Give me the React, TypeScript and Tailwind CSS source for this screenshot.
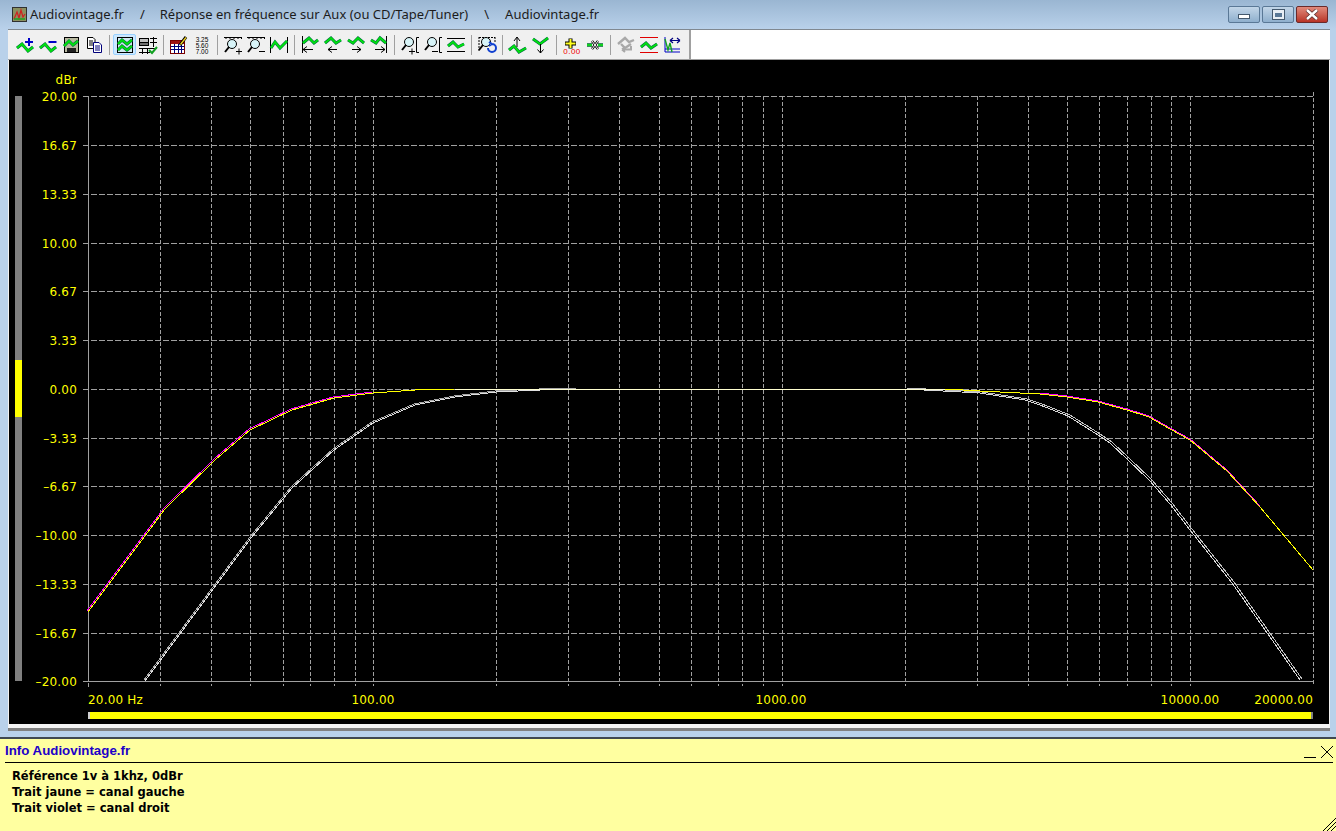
import type { ReactNode } from "react";

// Log scale of the plot: 20 Hz sits at x=88, 20 kHz at x=1313
const logX = (hz: number) => 88 + Math.log10(hz / 20) * (1225 / 3);

const FREQS = [
  30, 40, 50, 60, 70, 80, 90, 100, 200, 300, 400, 500, 600, 700, 800, 900, 1000, 2000, 3000, 4000, 5000, 6000, 7000,
  8000, 9000, 10000,
];

const LEVELS: [number, string][] = [
  [96, "20.00"],
  [145, "16.67"],
  [194, "13.33"],
  [243, "10.00"],
  [291, "6.67"],
  [340, "3.33"],
  [389, "0.00"],
  [438, "–3.33"],
  [486, "–6.67"],
  [535, "–10.00"],
  [584, "–13.33"],
  [633, "–16.67"],
  [681, "–20.00"],
];

const YELLOW_LEFT = "88,612 165,509 215,460 250,430 292,410 334,398 373,393 415,390 455,389";
const YELLOW_RIGHT =
  "945,389 980,391 1040,394 1067,397 1098,402 1127,410 1149,417 1170,429 1190,440 1227,471 1260,507 1313,570";
const PINK_LEFT = "88,612 165,509 215,460 250,430 292,410 334,398 373,393";
const PINK_RIGHT = "1040,394 1067,397 1098,402 1127,410 1149,417 1170,429 1190,440 1227,471 1260,507";
const WHITE_LEFT = "145,681 251,538 292,488 334,450 373,423 415,405 455,397 496,392 540,390 578,389";
const WHITE_RIGHT =
  "905,389 980,393 1025,400 1040,405 1068,416 1098,435 1110,443 1127,459 1149,480 1170,504 1190,530 1232,583 1270,637 1300,680";

const WAVE = "M2 13 L7 9 L13 16 L18 12";

function Wave({ d = WAVE }: { d?: string }) {
  return (
    <g fill="none" strokeLinejoin="miter">
      <path d={d} stroke="#064" strokeWidth="3" />
      <path d={d} stroke="#00e010" strokeWidth="2" />
    </g>
  );
}

function Glass({ x = 8, y = 8 }: { x?: number; y?: number }) {
  return (
    <g fill="none">
      <circle cx={x} cy={y} r="4.5" fill="#d8f4f8" stroke="#000" />
      <path d={`M${x - 3} ${y + 3} L${x - 7} ${y + 8}`} stroke="#000" strokeWidth="2" />
    </g>
  );
}

function Ruler() {
  return <path d="M1 2.5 H19 M3 2 V4 M7 2 V4 M11 2 V4 M15 2 V4 M18.5 2 V4" stroke="#000" fill="none" />;
}

function Ico({ children }: { children: ReactNode }) {
  return (
    <svg width="20" height="20" viewBox="0 0 20 20">
      {children}
    </svg>
  );
}

const arrow = "#000";

const ICONS: ReactNode[] = [
  <>
    <Wave />
    <path d="M10 7 H18 M14 3 V11" stroke="#0000c8" strokeWidth="2" />
  </>,
  <>
    <Wave />
    <path d="M10.5 7 H18.5" stroke="#0000c8" strokeWidth="2" />
  </>,
  <>
    <rect x="3.5" y="2.5" width="14" height="15" fill="#b8b8a0" stroke="#000" />
    <rect x="6" y="13" width="9" height="4" fill="#202020" />
    <Wave d="M3 11 L8 6 L12 10 L17 6" />
  </>,
  <>
    <path d="M3.5 2.5 H9 L11 4.5 V13.5 H3.5 Z" fill="#fff" stroke="#000" />
    <path d="M5 6 H9 M5 8 H9 M5 10 H9" stroke="#000" />
    <path d="M9.5 7.5 H15 L17.5 10 V17.5 H9.5 Z" fill="#fff" stroke="#00007a" />
    <path d="M11 11 H16 M11 13 H16 M11 15 H16" stroke="#00007a" />
  </>,
  <>
    <rect x="2.5" y="2.5" width="15" height="15" fill="#cfe8f0" stroke="#000" />
    <Wave d="M3 9 L7 5 L12 9 L17 5" />
    <Wave d="M3 15 L7 11 L12 15 L17 11" />
  </>,
  <>
    <rect x="1.5" y="3.5" width="9" height="5" fill="#c0c0c0" stroke="#000" />
    <rect x="1.5" y="7.5" width="9" height="3" fill="#707070" stroke="#000" />
    <path d="M12 3.5 H19 M12 7.5 H19 M1 13.5 H19 M1 17.5 H12 M4.5 13 V19 M9.5 13 V19 M15.5 2 V12" stroke="#000" fill="none" />
    <path d="M11 15 L14 18 L19 12" stroke="#10a020" strokeWidth="2" fill="none" />
  </>,
  <>
    <rect x="1.5" y="5.5" width="14" height="13" fill="#fff" stroke="#7a0000" />
    <rect x="2" y="6" width="13" height="3" fill="#a01010" />
    <path d="M2 11.5 H15 M2 14.5 H15 M5.5 9 V18 M9.5 9 V18 M12.5 9 V18" stroke="#00007a" />
    <path d="M11 10 L17 2" stroke="#000" strokeWidth="3" />
    <path d="M11.5 9.5 L17 2.5" stroke="#f0d020" strokeWidth="1.4" />
  </>,
  <text x="10" y="6.5" textAnchor="middle" fontSize="6.5" fontFamily="'Liberation Sans', sans-serif" fill="#000">
    3.25
    <tspan x="10" dy="6.5">
      5.60
    </tspan>
    <tspan x="10" dy="6">
      7.00
    </tspan>
  </text>,
  <>
    <Ruler />
    <Glass x={9} y={9} />
    <path d="M13 16.5 H19 M16 13.5 V19.5" stroke="#000" />
  </>,
  <>
    <Ruler />
    <Glass x={9} y={9} />
    <path d="M13 16.5 H19" stroke="#000" />
  </>,
  <>
    <path d="M1.5 2 V18 M18.5 2 V18" stroke="#000" />
    <Wave d="M2 13 L6 7 L11 13 L18 6" />
  </>,
  <>
    <path d="M2.5 1 V18" stroke="#000" />
    <Wave d="M3 8 L9 3 L14 8 L18 5" />
    <path d="M3 14.5 H13 M3 14.5 L7 11.5 M3 14.5 L7 17.5" stroke={arrow} fill="none" />
  </>,
  <>
    <Wave d="M2 8 L8 3 L13 8 L18 5" />
    <path d="M5 14.5 H14 M5 14.5 L9 11.5 M5 14.5 L9 17.5" stroke={arrow} fill="none" />
  </>,
  <>
    <Wave d="M2 5 L7 8 L12 3 L18 8" />
    <path d="M6 14.5 H15 M15 14.5 L11 11.5 M15 14.5 L11 17.5" stroke={arrow} fill="none" />
  </>,
  <>
    <path d="M17.5 1 V18" stroke="#000" />
    <Wave d="M2 5 L7 8 L11 3 L17 8" />
    <path d="M6 14.5 H16 M16 14.5 L12 11.5 M16 14.5 L12 17.5" stroke={arrow} fill="none" />
  </>,
  <>
    <Glass x={9} y={7} />
    <path d="M9 16.5 H15 M12 13.5 V19.5 M19 2.5 H16.5 V17.5 H19" stroke="#000" fill="none" />
  </>,
  <>
    <Glass x={9} y={7} />
    <path d="M9 16.5 H15 M19 2.5 H16.5 V17.5 H19" stroke="#000" fill="none" />
  </>,
  <>
    <path d="M1 3.5 H19 M1 16.5 H19" stroke="#000" />
    <Wave d="M2 11 L7 7 L12 12 L18 9" />
  </>,
  <>
    <path d="M2 2.5 H18 M2 2 V16 M18 2 V8" stroke="#000" strokeDasharray="2 1" fill="none" />
    <Glass x={9} y={7} />
    <path d="M11 13 A4 4 0 1 0 15 9 M15 9 L12 7 M15 9 L12 11" stroke="#1040d0" strokeWidth="2" fill="none" />
  </>,
  <>
    <Wave d="M1 15 L6 11 L11 17 L18 13" />
    <path d="M9 12 V2 M9 2 L6 6 M9 2 L12 6" stroke="#000" fill="none" />
  </>,
  <>
    <Wave d="M2 4 L9 9 L17 3" />
    <path d="M9.5 9 V18 M9.5 18 L6.5 14.5 M9.5 18 L12.5 14.5" stroke="#000" fill="none" />
  </>,
  <>
    <path d="M8.5 3.5 V13.5 M3 8.5 H14" stroke="#000" strokeWidth="4" />
    <path d="M8.5 4 V13 M3.5 8.5 H13.5" stroke="#ffff20" strokeWidth="2" />
    <text x="10" y="18.5" textAnchor="middle" fontSize="8" letterSpacing="0.5" fontFamily="'Liberation Sans', sans-serif" fill="#f00000">
      0.00
    </text>
  </>,
  <>
    <path d="M2 10 H7 M18 10 H13" stroke="#063" strokeWidth="3.4" />
    <path d="M2 10 H7 M18 10 H13" stroke="#10d020" strokeWidth="1.8" />
    <path d="M7 6 L13 14 M13 6 L7 14" stroke="#000" strokeWidth="2.4" />
    <path d="M7 6 L13 14 M13 6 L7 14" stroke="#fff" strokeWidth="1" />
  </>,
  <>
    <path d="M2 9 L9 3 L13 7 L18 5 M5 9 L9 13 L15 9" stroke="#a8a8a8" strokeWidth="2.4" fill="none" />
    <path d="M6 14.5 H15 V11 M6 14.5 L9 12 M6 14.5 L9 17" stroke="#a8a8a8" strokeWidth="2" fill="none" />
  </>,
  <>
    <path d="M1 2.5 H19 M1 17.5 H19" stroke="#e00000" strokeWidth="1.2" />
    <Wave d="M2 12 L7 8 L12 13 L18 9" />
  </>,
  <>
    <path d="M3 2 V17 H18 M3 14 H18" stroke="#0000c8" fill="none" />
    <path d="M3 4 L6 15 L8 8 L10 17" stroke="#10a020" fill="none" strokeWidth="1.4" />
    <path d="M8 5.5 H18 M8 5.5 L11 3 M8 5.5 L11 8 M18 5.5 L15 3 M18 5.5 L15 8" stroke="#000080" strokeWidth="1.2" fill="none" />
  </>,
];

// null in the layout stands for a separator
const LAYOUT = [0, 1, 2, 3, null, 4, 5, null, 6, 7, null, 8, 9, 10, null, 11, 12, 13, 14, null, 15, 16, 17, null, 18, null, 19, 20, null, 21, 22, null, 23, 24, 25];

function Toolbar() {
  return (
    <div className="flex">
      <div className="flex h-[29px] w-[683px] items-center border-r-2 border-[#a0a0a0] bg-[#f0f0f0] pl-[5px]">
        {LAYOUT.map((n, i) =>
          n === null ? (
            <div key={i} className="flex h-[20px] w-[8px] justify-center">
              <div className="w-px bg-[#a0a0a0]" />
            </div>
          ) : (
            <div
              key={i}
              className={
                n === 4
                  ? "flex h-[21px] w-[23px] items-center justify-center rounded-[2px] border border-[#99d1ff] bg-[#cce8ff]"
                  : "flex h-[21px] w-[23px] items-center justify-center"
              }
            >
              <Ico>{ICONS[n]}</Ico>
            </div>
          ),
        )}
      </div>
      <div className="flex-1 bg-white" />
    </div>
  );
}

function TitleBar() {
  return (
    <div className="flex h-[29px] items-center bg-gradient-to-b from-[#9ab6d2] to-[#b9d1ea] pl-[12px] pr-[8px] text-[13px] text-[#1c1c1c] [font-family:'Noto_Sans',sans-serif]">
      <svg width="15" height="15" viewBox="0 0 15 15" className="mr-[3px]">
        <rect x="0.5" y="0.5" width="14" height="14" fill="#8a9060" stroke="#303030" />
        <path d="M2 12 L5 5 L7 11 L9 3 L11 10 L13 7" fill="none" stroke="#d02020" strokeWidth="1.2" />
        <path d="M2 12 H13" stroke="#20a020" strokeWidth="1.5" />
      </svg>
      <span>Audiovintage.fr</span>
      <span className="ml-[16px]">/</span>
      <span className="ml-[15px]">Réponse en fréquence sur Aux (ou CD/Tape/Tuner)</span>
      <span className="ml-[16px]">\</span>
      <span className="ml-[16px]">Audiovintage.fr</span>
      <div className="ml-auto flex gap-[2px]">
        <div className="flex h-[17px] w-[32px] items-center justify-center rounded-[2px] border border-[#5a7896] bg-gradient-to-b from-[#c3d6e8] to-[#8fafcd]">
          <div className="mt-[3px] h-[5px] w-[12px] border border-[#44586c] bg-white" />
        </div>
        <div className="flex h-[17px] w-[32px] items-center justify-center rounded-[2px] border border-[#5a7896] bg-gradient-to-b from-[#c3d6e8] to-[#8fafcd]">
          <div className="h-[9px] w-[11px] border-2 border-t-[3px] border-[#e8eef4] bg-[#5a7896] outline outline-1 outline-[#44586c]" />
        </div>
        <div className="flex h-[17px] w-[32px] items-center justify-center rounded-[2px] border border-[#6a2a2a] bg-gradient-to-b from-[#e08a7c] to-[#b83226]">
          <svg width="14" height="11" viewBox="0 0 14 11">
            <path d="M2 1 L12 10 M12 1 L2 10" stroke="#5a3030" strokeWidth="4" />
            <path d="M2 1 L12 10 M12 1 L2 10" stroke="#fff" strokeWidth="2.4" />
          </svg>
        </div>
      </div>
    </div>
  );
}

function Plot() {
  const label = { fontFamily: "'DejaVu Sans', sans-serif", fontSize: 12, letterSpacing: 0.2, fill: "#ffff00" };
  return (
    <svg width="1320" height="664" viewBox="9 60 1320 664" className="block bg-black">
      {/* level slider */}
      <rect x="15" y="96" width="7" height="585" fill="#808080" />
      <rect x="15" y="360" width="7" height="57" fill="#ffff00" />

      <g shapeRendering="crispEdges" stroke="#a0a0a0" fill="none">
        {LEVELS.slice(0, -1).map(([y]) => (
          <path key={y} d={`M83 ${y + 0.5} H1313`} strokeDasharray="6 2" />
        ))}
        {FREQS.map((f) => (
          <path key={f} d={`M${Math.round(logX(f)) + 0.5} 96 V686`} strokeDasharray="4 2" />
        ))}
        <path d="M1313.5 92 V686" strokeDasharray="4 2" />
        <path d="M88.5 96 V681 M83 681.5 H1313" />
        <path d="M88.5 683 V687" />

        {/* curves: lower pair is doubled, one line per channel */}
        <polyline points={WHITE_LEFT} stroke="#a8a8a8" transform="translate(-1 -1)" />
        <polyline points={WHITE_LEFT} stroke="#e0e0e0" />
        <polyline points={WHITE_RIGHT} stroke="#c0c0c0" transform="translate(2 -1)" />
        <polyline points={WHITE_RIGHT} stroke="#d8d8d8" />
        <polyline points={PINK_LEFT} stroke="#ff00ff" transform="translate(-1 -1)" />
        <polyline points={PINK_RIGHT} stroke="#ff00ff" transform="translate(0 -1)" />
        <polyline points={YELLOW_LEFT} stroke="#ffff00" />
        <polyline points={YELLOW_RIGHT} stroke="#ffff00" />
        <path d="M455 389.5 H945" stroke="#ffffd0" />
      </g>

      <text x="77" y="84" textAnchor="end" {...label}>
        dBr
      </text>
      {LEVELS.map(([y, t]) => (
        <text key={y} x="77" y={y + 5} textAnchor="end" {...label}>
          {t}
        </text>
      ))}
      <text x="88" y="704" {...label}>
        20.00 Hz
      </text>
      <text x="373" y="704" textAnchor="middle" {...label}>
        100.00
      </text>
      <text x="781" y="704" textAnchor="middle" {...label}>
        1000.00
      </text>
      <text x="1190" y="704" textAnchor="middle" {...label}>
        10000.00
      </text>
      <text x="1313" y="704" textAnchor="end" {...label}>
        20000.00
      </text>

      {/* horizontal scroll */}
      <rect x="88" y="712" width="1225" height="7" fill="#ffff00" />
      <rect x="88" y="712" width="2" height="7" fill="#d0d0d0" />
      <rect x="1311" y="712" width="2" height="7" fill="#808080" />
    </svg>
  );
}

function InfoPanel() {
  return (
    <div className="flex flex-1 flex-col border-t-2 border-[#404850] bg-[#ffffa0] pl-[5px] pr-[3px]">
      <div className="flex h-[24px] items-end justify-between border-b border-black pb-[2px]">
        <span className="text-[13.3px] font-bold leading-[18px] text-[#2000c8] [font-family:'Liberation_Sans',sans-serif]">
          Info Audiovintage.fr
        </span>
        <svg width="29" height="13" viewBox="0 0 29 13" className="mb-[1px]">
          <path d="M0 11.5 H12 M17 0 L29 12 M29 0 L17 12" stroke="#000" fill="none" />
        </svg>
      </div>
      <div className="relative flex-1 pl-[7px] pt-[5px] text-[11.5px] font-bold leading-[16px] text-black [font-family:'DejaVu_Sans',sans-serif]">
        <div>Référence 1v à 1khz, 0dBr</div>
        <div>Trait jaune = canal gauche</div>
        <div>Trait violet = canal droit</div>
        <svg width="14" height="14" viewBox="0 0 14 14" className="absolute bottom-0 right-[-3px]">
          <path d="M1 14 L14 1 M5 14 L14 5 M9 14 L14 9" stroke="#000" fill="none" />
        </svg>
      </div>
    </div>
  );
}

export default function App() {
  return (
    <div className="flex h-[831px] w-[1336px] flex-col overflow-hidden bg-[#b9d1ea]">
      <TitleBar />
      <div className="ml-[8px] mr-[6px] flex flex-col border-t border-[#808890]">
        <Toolbar />
        <div className="h-px bg-[#a0a0a0]" />
        <div className="border-l border-r border-[#f0f0f0]">
          <Plot />
        </div>
        <div className="h-[4px] bg-[#f4f4f4]" />
        <div className="h-[3px] bg-[#808080]" />
      </div>
      <div className="h-[6px] shrink-0" />
      <InfoPanel />
    </div>
  );
}
